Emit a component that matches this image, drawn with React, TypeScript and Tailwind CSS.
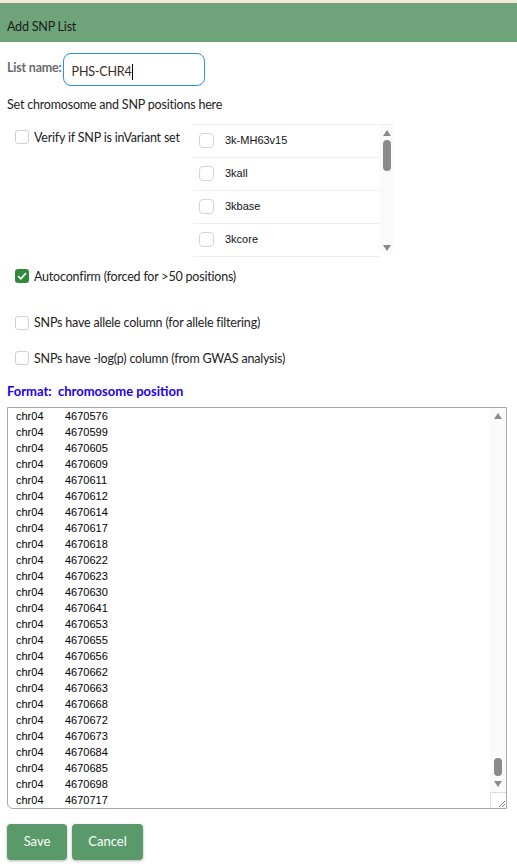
import type { ReactNode } from "react";

const posicoes = [
  "4670576", "4670599", "4670605", "4670609", "4670611", "4670612", "4670614",
  "4670617", "4670618", "4670622", "4670623", "4670630", "4670641", "4670653",
  "4670655", "4670656", "4670662", "4670663", "4670668", "4670672", "4670673",
  "4670684", "4670685", "4670698", "4670717",
];

const conjuntos = ["3k-MH63v15", "3kall", "3kbase", "3kcore"];

function Caixa({ marcada = false }: { marcada?: boolean }) {
  if (marcada) {
    return (
      <span className="flex size-[14px] shrink-0 items-center justify-center rounded-[3px] bg-[#2f8a3c]">
        <svg viewBox="0 0 14 14" className="size-[12px]" aria-hidden="true">
          <path d="M2.5 7.2 5.6 10.2 11.6 3.6" fill="none" stroke="white" strokeWidth="2" />
        </svg>
      </span>
    );
  }
  return <span className="size-[14px] shrink-0 rounded-[3px] border border-[#cfcfcf] bg-white" />;
}

function Opcao({ children, marcada }: { children: ReactNode; marcada?: boolean }) {
  return (
    <label className="flex items-center gap-[5px] pl-[15px] text-[#222]">
      <Caixa marcada={marcada} />
      {children}
    </label>
  );
}

function Seta({ baixo = false }: { baixo?: boolean }) {
  return (
    <svg viewBox="0 0 8 6" className="h-[6px] w-[8px]" aria-hidden="true">
      <path d={baixo ? "M0 0h8L4 6z" : "M4 0l4 6H0z"} fill="#8a8a8a" />
    </svg>
  );
}

export default function App() {
  return (
    <div className="h-[864px] w-[517px] bg-white font-['Lato',sans-serif] text-[12.5px] leading-[19.5px] tracking-[-0.2px]">
      <div className="h-[3px] bg-[#f3e9d7]" />
      <div className="flex h-[39px] items-center bg-[#6fa37a] px-[7px] pt-[9px] text-[#1c1c1c]">
        Add SNP List
      </div>

      <div className="flex items-center pl-[7px] pt-[11px]">
        <span className="-mt-[3px] font-bold text-[#6b6b6b]">List name:</span>
        <div className="ml-[1px] flex h-[33px] w-[142px] items-center rounded-[8px] border border-[#2c8ef0] px-[8px] pt-[4px] text-[#3a2a1a]">
          PHS-CHR4<span className="ml-[1px] h-[16px] w-[1px] bg-black" />
        </div>
      </div>

      <p className="pl-[7px] pt-[9px] text-[#222]">Set chromosome and SNP positions here</p>

      <div className="flex pt-[9px]">
        <div className="w-[193px] pt-[4px]">
          <Opcao>Verify if SNP is inVariant set</Opcao>
        </div>
        <div className="flex h-[130px] w-[200px] border-t border-[#eeeeee]">
          <div className="flex-1 font-['Liberation_Sans',sans-serif] text-[11px] tracking-normal text-[#111]">
            {conjuntos.map((c) => (
              <div key={c} className="flex h-[33px] items-center gap-[11px] border-b border-[#eeeeee] pl-[6px]">
                <span className="size-[15px] rounded-[4px] border border-[#d4d4d4]" />
                {c}
              </div>
            ))}
          </div>
          <div className="flex w-[13px] flex-col items-center bg-[#fafafa] pt-[5px] pb-[3px]">
            <Seta />
            <span className="mt-[4px] h-[31px] w-[8px] rounded-full bg-[#8a8a8a]" />
            <span className="flex-1" />
            <Seta baixo />
          </div>
        </div>
      </div>

      <div className="pt-[13px]">
        <Opcao marcada>Autoconfirm (forced for &gt;50 positions)</Opcao>
      </div>
      <div className="pt-[27px]">
        <Opcao>SNPs have allele column (for allele filtering)</Opcao>
      </div>
      <div className="pt-[16px]">
        <Opcao>SNPs have -log(p) column (from GWAS analysis)</Opcao>
      </div>

      <p className="pl-[7px] pt-[14px] text-[13px] font-bold tracking-normal text-[#1a00ee]">
        Format:&nbsp; chromosome position
      </p>

      <div className="ml-[7px] mt-[5px] flex h-[402px] w-[500px] overflow-hidden rounded-bl-[6px] border border-[#a8a8a8]">
        <div className="flex-1 pl-[8px] font-['Liberation_Sans',sans-serif] text-[11px] leading-[16px] tracking-normal text-black">
          {posicoes.map((p) => (
            <div key={p} className="flex">
              <span className="w-[49px]">chr04</span>
              <span>{p}</span>
            </div>
          ))}
        </div>
        <div className="flex w-[16px] flex-col items-center bg-[#fafafa]">
          <span className="pt-[5px]">
            <Seta />
          </span>
          <span className="flex-1" />
          <span className="h-[18px] w-[8px] rounded-full bg-[#8a8a8a]" />
          <span className="pt-[5px] pb-[5px]">
            <Seta baixo />
          </span>
          <span className="flex h-[16px] w-[16px] items-end justify-end border-l border-t border-[#dddddd] bg-white">
            <svg viewBox="0 0 10 10" className="size-[10px]" aria-hidden="true">
              <path d="M9 3 3 9M9 6 6 9" stroke="#777" strokeWidth="1" />
            </svg>
          </span>
        </div>
      </div>

      <div className="flex gap-[5px] pl-[7px] pt-[15px]">
        <button className="h-[36px] w-[60px] rounded-[4px] bg-[#5a9a6a] text-[13px] tracking-normal text-white shadow-[0_1px_3px_rgba(0,0,0,0.3)]">
          Save
        </button>
        <button className="h-[36px] w-[71px] rounded-[4px] bg-[#5a9a6a] text-[13px] tracking-normal text-white shadow-[0_1px_3px_rgba(0,0,0,0.3)]">
          Cancel
        </button>
      </div>
    </div>
  );
}
